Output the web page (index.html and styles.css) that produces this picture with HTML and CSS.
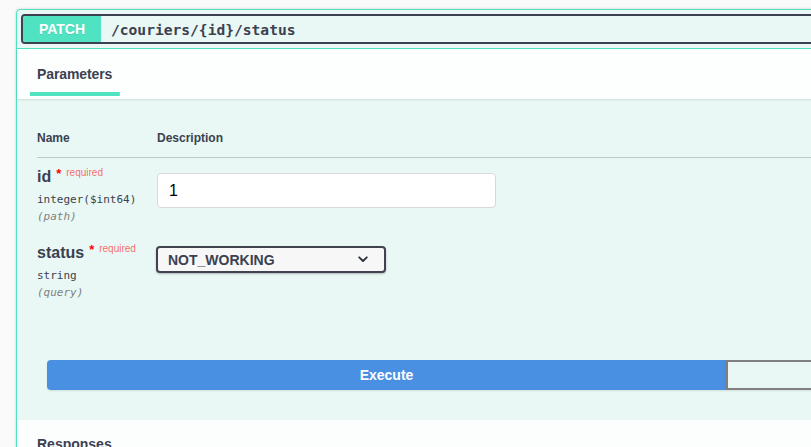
FILE: index.html
```html
<!DOCTYPE html>
<html lang="en">
<head>
<meta charset="utf-8">
<title>PATCH /couriers/{id}/status</title>
<link rel="stylesheet" href="styles.css">
</head>
<body>
<div class="page">
  <div class="opblock">
    <div class="summary">
      <div class="summary-control">
        <span class="method">PATCH</span>
        <span class="path">/couriers/{id}/status</span>
      </div>
    </div>
    <div class="section-header">
      <h4 class="tab"><span class="tab-label">Parameters</span></h4>
    </div>
    <div class="params-body">
      <div class="table-container">
        <div class="params-table">
          <div class="row head">
            <div class="col-name">Name</div>
            <div class="col-desc">Description</div>
          </div>
          <div class="row">
            <div class="col-name">
              <div class="pname">id<span class="star">*</span><span class="req">required</span></div>
              <div class="ptype">integer($int64)</div>
              <div class="pin">(path)</div>
            </div>
            <div class="col-desc">
              <div class="text-input">1</div>
            </div>
          </div>
          <div class="row">
            <div class="col-name">
              <div class="pname">status<span class="star">*</span><span class="req">required</span></div>
              <div class="ptype">string</div>
              <div class="pin">(query)</div>
            </div>
            <div class="col-desc">
              <div class="select">
                <span>NOT_WORKING</span>
                <svg class="chev" width="10" height="7" viewBox="0 0 10 7"><path d="M1.2 1.3 L5 5 L8.8 1.3" fill="none" stroke="#2b2f38" stroke-width="1.8" stroke-linecap="round" stroke-linejoin="round"/></svg>
              </div>
            </div>
          </div>
        </div>
      </div>
      <div class="btn-group">
        <div class="btn execute">Execute</div>
        <div class="btn clear"></div>
      </div>
    </div>
    <div class="responses-header">
      <h4 class="responses-title">Responses</h4>
    </div>
  </div>
</div>
</body>
</html>
```

FILE: styles.css
```css
html, body {
  margin: 0;
  padding: 0;
  overflow: hidden;
  background: #fafafa;
  font-family: "Liberation Sans", Arial, sans-serif;
  color: #3b4151;
}

.page {
  padding: 9px 0 0 16px;
}

.opblock {
  width: 1422px;
  border: 1px solid #50e3c2;
  border-radius: 4px;
  background: #e9f8f4;
  box-shadow: 0 0 3px rgba(0, 0, 0, 0.19);
}

.summary {
  padding: 4px;
  border-bottom: 1px solid #50e3c2;
}

.summary-control {
  display: flex;
  align-items: center;
  border: 2px solid #3b4151;
  border-radius: 4px;
  height: 26px;
}

.method {
  width: 78px;
  height: 26px;
  line-height: 26px;
  text-align: center;
  background: #50e3c2;
  color: #fff;
  font-weight: 700;
  font-size: 14px;
  border-radius: 3px 0 0 3px;
  text-shadow: 0 1px 0 rgba(0, 0, 0, 0.1);
}

.path {
  padding: 0 10px;
  font-family: "DejaVu Sans Mono", "Liberation Mono", monospace;
  font-weight: 700;
  font-size: 14.6px;
  color: #3b4151;
}

.section-header {
  height: 50px;
  background: rgba(255, 255, 255, 0.9);
  box-shadow: 0 1px 2px rgba(0, 0, 0, 0.1);
  padding: 0 20px;
  display: flex;
  align-items: center;
  position: relative;
}

.tab {
  margin: 0;
  font-size: 14px;
  font-weight: 700;
  letter-spacing: -0.1px;
}

.tab-label {
  position: relative;
}

.tab-label::after {
  content: "";
  position: absolute;
  left: 50%;
  transform: translateX(-50%);
  bottom: -14px;
  width: 120%;
  height: 4px;
  background: #50e3c2;
}

.table-container {
  padding: 20px;
}

.params-table {
  display: flex;
  flex-direction: column;
}

.row {
  display: flex;
  padding: 10px 0;
}

.row.head {
  padding: 12px 0 12px;
  font-size: 12px;
  font-weight: 700;
  border-bottom: 1px solid rgba(59, 65, 81, 0.25);
}

.col-name {
  width: 120px;
  flex: none;
}

.col-desc {
  flex: 1;
}

.pname {
  font-size: 16px;
  font-weight: 700;
  line-height: 18px;
}

.star {
  color: #f00;
  font-size: 13px;
  margin-left: 5px;
  position: relative;
  top: -4px;
}

.req {
  color: rgba(255, 0, 0, 0.6);
  font-size: 10px;
  font-weight: 400;
  margin-left: 5px;
  position: relative;
  top: -6px;
}

.ptype {
  font-family: "DejaVu Sans Mono", "Liberation Mono", monospace;
  font-size: 11px;
  line-height: 14px;
  padding-top: 5px;
  color: #3b4151;
}

.pin {
  font-family: "DejaVu Sans Mono", "Liberation Mono", monospace;
  font-size: 11px;
  font-style: italic;
  line-height: 14px;
  padding-top: 3px;
  color: #808080;
}

.text-input {
  box-sizing: border-box;
  width: 339px;
  height: 35px;
  margin-top: 5px;
  padding: 0 11px;
  line-height: 33px;
  background: #fff;
  border: 1px solid #d9d9d9;
  border-radius: 4px;
  font-size: 16px;
  color: #000;
}

.select {
  box-sizing: border-box;
  width: 230px;
  height: 27px;
  margin-top: 2px;
  margin-left: -1px;
  padding: 0 16px 0 10px;
  display: flex;
  align-items: center;
  justify-content: space-between;
  background: #f7f7f7;
  border: 2px solid #41444e;
  border-radius: 4px;
  box-shadow: 0 1px 2px rgba(0, 0, 0, 0.25);
  font-size: 14px;
  font-weight: 700;
  color: #3b4151;
}

.chev {
  display: block;
}

.btn-group {
  display: flex;
  padding: 30px;
}

.btn {
  flex: 1;
  box-sizing: border-box;
  height: 30px;
}

.execute {
  background: #4990e2;
  color: #fff;
  font-size: 14px;
  font-weight: 700;
  line-height: 30px;
  text-align: center;
  border-radius: 4px 0 0 4px;
  box-shadow: 0 1px 2px rgba(0, 0, 0, 0.1);
}

.clear {
  border: 2px solid #808080;
  border-radius: 0 4px 4px 0;
  box-shadow: 0 1px 2px rgba(0, 0, 0, 0.1);
}

.responses-header {
  background: rgba(255, 255, 255, 0.85);
  padding: 16px 20px 30px;
}

.responses-title {
  margin: 0;
  font-size: 14px;
  font-weight: 700;
}
```
